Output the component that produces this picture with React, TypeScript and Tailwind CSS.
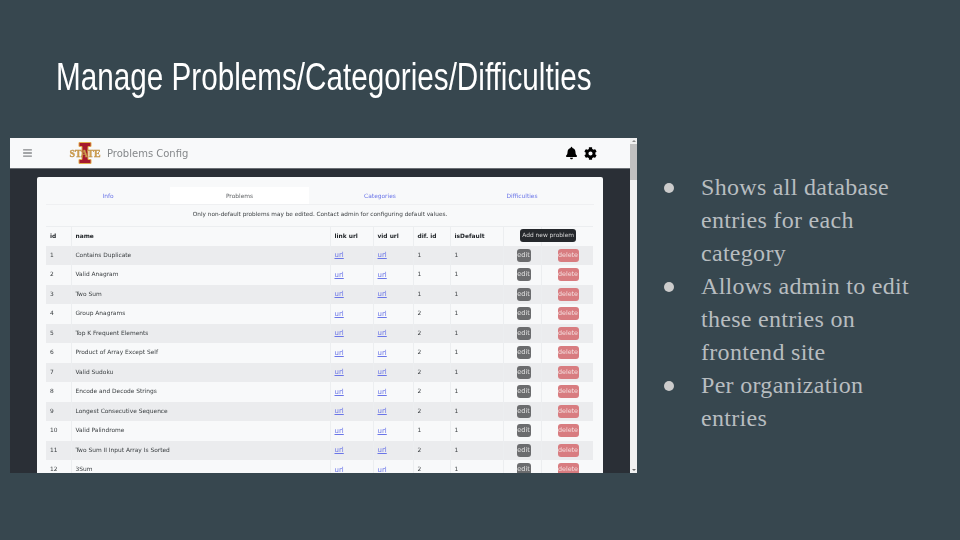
import { FaBars, FaBell, FaCog } from "react-icons/fa";

const problems = [
  { id: 1, name: "Contains Duplicate", dif: 1 },
  { id: 2, name: "Valid Anagram", dif: 1 },
  { id: 3, name: "Two Sum", dif: 1 },
  { id: 4, name: "Group Anagrams", dif: 2 },
  { id: 5, name: "Top K Frequent Elements", dif: 2 },
  { id: 6, name: "Product of Array Except Self", dif: 2 },
  { id: 7, name: "Valid Sudoku", dif: 2 },
  { id: 8, name: "Encode and Decode Strings", dif: 2 },
  { id: 9, name: "Longest Consecutive Sequence", dif: 2 },
  { id: 10, name: "Valid Palindrome", dif: 1 },
  { id: 11, name: "Two Sum II Input Array Is Sorted", dif: 2 },
  { id: 12, name: "3Sum", dif: 2 },
];

const bullets = ["Shows all database entries for each category", "Allows admin to edit these entries on frontend site", "Per organization entries"];

function StateLogo() {
  return (
    <svg width="32" height="22" viewBox="0 0 32 22" className="shrink-0">
      <path d="M10 .5h12v4h-3v13h3v4H10v-4h3v-13h-3z" fill="#a6192e" stroke="#e0ac4c" strokeWidth="1" />
      <text x="16" y="15" textAnchor="middle" fontSize="9.5" fontWeight="700" fontFamily="Liberation Serif, serif" fill="#d0a050" stroke="#b98a3e" strokeWidth="0.3" textLength="31" lengthAdjust="spacingAndGlyphs">
        STATE
      </text>
    </svg>
  );
}

function ProblemsTable() {
  const th = "border-r border-[#eceef0] px-[4px] text-left font-bold text-[#212529]";
  const td = "border-r border-[#eceef0] px-[4px] align-middle";
  return (
    <table className="w-[547px] table-fixed border-collapse text-[5.9px] text-[#3c4043]">
      <colgroup>
        <col className="w-[25px]" />
        <col className="w-[259px]" />
        <col className="w-[43px]" />
        <col className="w-[40px]" />
        <col className="w-[37px]" />
        <col className="w-[53px]" />
        <col className="w-[38px]" />
        <col className="w-[52px]" />
      </colgroup>
      <thead>
        <tr className="h-[19px] border-t border-[#eceef0]">
          <th className={th}>id</th>
          <th className={th}>name</th>
          <th className={th}>link url</th>
          <th className={th}>vid url</th>
          <th className={th}>dif. id</th>
          <th className={th}>isDefault</th>
          <th className={th}></th>
          <th></th>
        </tr>
      </thead>
      <tbody>
        {problems.map((p, i) => (
          <tr key={p.id} className={i % 2 === 0 ? "h-[19.5px] bg-[#ebecee]" : "h-[19.5px] bg-[#f8f9fa]"}>
            <td className={td}>{p.id}</td>
            <td className={td}>{p.name}</td>
            <td className={td + " text-[7px] text-[#6a75e8] underline"}>url</td>
            <td className={td + " text-[7px] text-[#6a75e8] underline"}>url</td>
            <td className={td}>{p.dif}</td>
            <td className={td}>1</td>
            <td className="border-r border-[#eceef0] pl-[13px] align-middle">
              <span className="block h-[13px] w-[14px] rounded-[3px] bg-[#6b6c6e] text-center text-[6.6px] leading-[13px] text-[#e4e4e4]">edit</span>
            </td>
            <td className="pl-[16px] align-middle">
              <span className="block h-[13px] w-[21px] rounded-[3px] bg-[#d87c80] text-center text-[6.4px] leading-[13px] text-[#f3dcdc]">delete</span>
            </td>
          </tr>
        ))}
      </tbody>
    </table>
  );
}

function ConfigScreenshot() {
  return (
    <div className="relative flex h-[335px] w-[627px] shrink-0 overflow-hidden blur-[0.5px] font-['DejaVu_Sans',sans-serif]">
      <div className="flex min-w-0 flex-1 flex-col bg-[#2a2f36]">
        <header className="flex h-[31px] shrink-0 items-center border-b border-[#6b6f74] bg-[#f8f9fa] pl-[13px] pr-[33px]">
          <FaBars className="h-[10px] w-[9px] text-[#85888b]" />
          <div className="ml-[37px] mr-[6px]"><StateLogo /></div>
          <span className="mt-[1px] text-[10px] text-[#85888b]">Problems Config</span>
          <div className="ml-auto flex items-center gap-[7px] text-black">
            <FaBell className="h-[14px] w-[11px]" />
            <FaCog className="h-[13px] w-[13px]" />
          </div>
        </header>
        <div className="min-h-0 flex-1 px-[27px] pt-[8px]">
          <div className="relative rounded-t-[2px] bg-[#f8f9fa] px-[9px] pt-[10px] pb-[40px]">
            <nav className="flex h-[18px] border-b border-[#eff0f2] text-center text-[5.9px] leading-[18px] text-[#6a75e8]">
              <span className="w-[124px]">Info</span>
              <span className="w-[139px] bg-white text-[#5f6265]">Problems</span>
              <span className="w-[142px]">Categories</span>
              <span className="w-[142px]">Difficulties</span>
            </nav>
            <p className="mt-[4px] mb-[7px] text-center text-[5.75px] leading-[10px] text-[#3c4043]">
              Only non-default problems may be edited. Contact admin for configuring default values.
            </p>
            <ProblemsTable />
            <div className="absolute right-[27px] top-[52px] h-[13px] rounded-[3px] bg-[#25282c] px-[2px] text-[5.9px] leading-[13px] text-[#d6d6d6]">
              Add new problem
            </div>
          </div>
        </div>
      </div>
      <div className="flex w-[7px] shrink-0 flex-col items-center justify-between bg-[#f1f1f1] py-[2px]">
        <div className="h-0 w-0 border-x-[2px] border-b-[2px] border-x-transparent border-b-[#8a8a8a]" />
        <div className="mb-auto mt-[2px] h-[36px] w-full bg-[#c1c1c1]" />
        <div className="h-0 w-0 border-x-[2px] border-t-[2px] border-x-transparent border-t-[#6a6a6a]" />
      </div>
    </div>
  );
}

export default function App() {
  return (
    <div className="h-[540px] w-[960px] overflow-hidden bg-[#37474f]">
      <h1 className="h-[138px] origin-left scale-x-[0.761] whitespace-nowrap pl-[73.6px] pt-[52px] font-['Liberation_Sans',sans-serif] text-[39px] leading-[50px] text-white">
        Manage Problems/Categories/Difficulties
      </h1>
      <div className="flex pl-[10px]">
        <ConfigScreenshot />
        <ul className="ml-[27px] mt-[33px] w-[262px] font-['Liberation_Serif',serif] text-[24px] leading-[33px] tracking-[0.3px] text-[#b8bdc0]">
          {bullets.map((b) => (
            <li key={b} className="relative pl-[37px]">
              <span className="absolute left-0 top-[12px] h-[10px] w-[10px] rounded-full bg-[#cccccc]" />
              {b}
            </li>
          ))}
        </ul>
      </div>
    </div>
  );
}
